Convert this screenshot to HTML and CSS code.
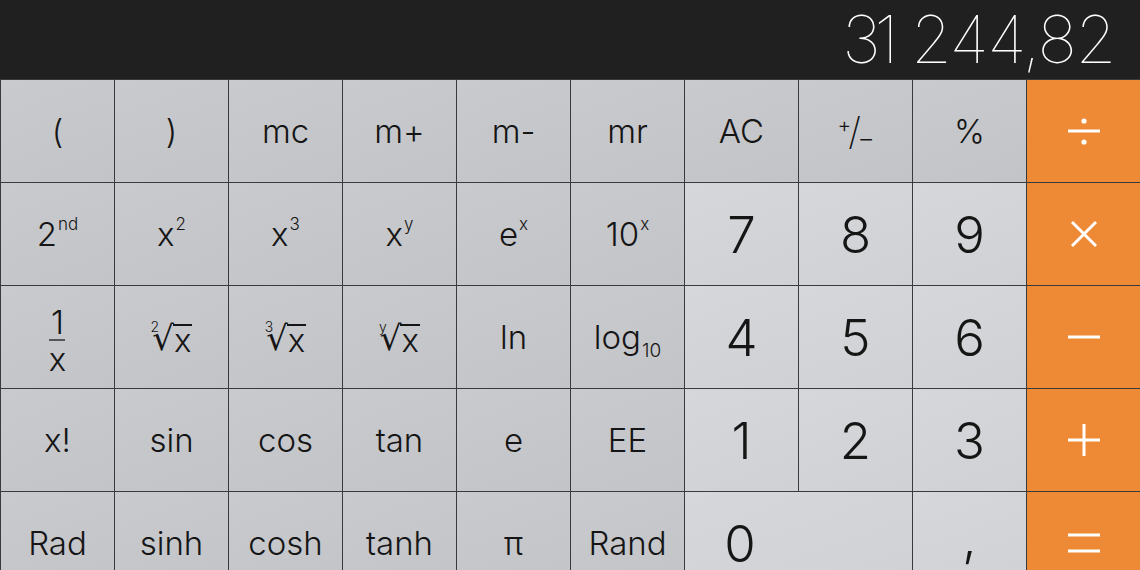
FILE: index.html
```html
<!DOCTYPE html>
<html lang="de">
<head>
<meta charset="utf-8">
<title>Rechner</title>
<link rel="stylesheet" href="styles.css">
</head>
<body>
<div class="calc">
  <div class="display"><span class="value"><span class="grp"><span class="d3">3</span>1</span><span class="rest">244,82</span></span></div>
  <div class="pad">
    <div class="key fn"><span class="lbl">(</span></div>
    <div class="key fn"><span class="lbl">)</span></div>
    <div class="key fn"><span class="lbl">mc</span></div>
    <div class="key fn"><span class="lbl">m+</span></div>
    <div class="key fn"><span class="lbl">m-</span></div>
    <div class="key fn"><span class="lbl">mr</span></div>
    <div class="key fn"><span class="lbl">AC</span></div>
    <div class="key fn"><span class="lbl pm"><span class="pm-p">+</span><span class="pm-s">/</span><span class="pm-m">−</span></span></div>
    <div class="key fn"><span class="lbl">%</span></div>
    <div class="key op">
      <svg width="34" height="34" viewBox="0 0 34 34"><path d="M1 17H33" stroke="#fff" stroke-width="3"/><circle cx="17" cy="7" r="2.6" fill="#fff"/><circle cx="17" cy="28" r="2.6" fill="#fff"/></svg>
    </div>

    <div class="key fn"><span class="lbl">2<sup class="sp">nd</sup></span></div>
    <div class="key fn"><span class="lbl">x<sup class="sp">2</sup></span></div>
    <div class="key fn"><span class="lbl">x<sup class="sp">3</sup></span></div>
    <div class="key fn"><span class="lbl">x<sup class="sp">y</sup></span></div>
    <div class="key fn"><span class="lbl">e<sup class="sp">x</sup></span></div>
    <div class="key fn"><span class="lbl">10<sup class="sp">x</sup></span></div>
    <div class="key num"><span class="dig">7</span></div>
    <div class="key num"><span class="dig">8</span></div>
    <div class="key num"><span class="dig">9</span></div>
    <div class="key op">
      <svg width="28" height="28" viewBox="0 0 28 28"><path d="M2 2L26 26M26 2L2 26" stroke="#fff" stroke-width="3"/></svg>
    </div>

    <div class="key fn"><span class="frac"><span class="fr-n">1</span><span class="fr-bar"></span><span class="fr-d">x</span></span></div>
    <div class="key fn"><span class="root"><span class="idx">2</span><span class="rad">√</span><span class="rx">x</span></span></div>
    <div class="key fn"><span class="root"><span class="idx">3</span><span class="rad">√</span><span class="rx">x</span></span></div>
    <div class="key fn"><span class="root"><span class="idx">y</span><span class="rad">√</span><span class="rx">x</span></span></div>
    <div class="key fn"><span class="lbl">ln</span></div>
    <div class="key fn"><span class="lbl">log<sub class="sb">10</sub></span></div>
    <div class="key num"><span class="dig">4</span></div>
    <div class="key num"><span class="dig">5</span></div>
    <div class="key num"><span class="dig">6</span></div>
    <div class="key op">
      <svg width="34" height="6" viewBox="0 0 34 6"><path d="M1 3H33" stroke="#fff" stroke-width="3"/></svg>
    </div>

    <div class="key fn"><span class="lbl">x!</span></div>
    <div class="key fn"><span class="lbl">sin</span></div>
    <div class="key fn"><span class="lbl">cos</span></div>
    <div class="key fn"><span class="lbl">tan</span></div>
    <div class="key fn"><span class="lbl">e</span></div>
    <div class="key fn"><span class="lbl">EE</span></div>
    <div class="key num"><span class="dig">1</span></div>
    <div class="key num"><span class="dig">2</span></div>
    <div class="key num"><span class="dig">3</span></div>
    <div class="key op">
      <svg width="34" height="34" viewBox="0 0 34 34"><path d="M1 17H33M17 1V33" stroke="#fff" stroke-width="3"/></svg>
    </div>

    <div class="key fn"><span class="lbl">Rad</span></div>
    <div class="key fn"><span class="lbl">sinh</span></div>
    <div class="key fn"><span class="lbl">cosh</span></div>
    <div class="key fn"><span class="lbl">tanh</span></div>
    <div class="key fn"><span class="lbl">π</span></div>
    <div class="key fn"><span class="lbl">Rand</span></div>
    <div class="key num zero"><span class="dig zero-dig">0</span></div>
    <div class="key num"><span class="dig comma">,</span></div>
    <div class="key op">
      <svg width="34" height="20" viewBox="0 0 34 20"><path d="M1 2H33M1 18H33" stroke="#fff" stroke-width="3"/></svg>
    </div>
  </div>
</div>
</body>
</html>
```

FILE: styles.css
```css
html, body {
  margin: 0;
  padding: 0;
  width: 1140px;
  height: 570px;
  overflow: hidden;
  background: #202020;
}

.calc {
  width: 1140px;
  font-family: "Inter", "Liberation Sans", sans-serif;
  color: #151515;
}

.display {
  height: 79px;
  box-sizing: border-box;
  padding: 6px 25px 0 0;
  background: #202020;
  display: flex;
  justify-content: flex-end;
}

.value {
  display: flex;
  gap: 14px;
  color: #fff;
  font-size: 66px;
  line-height: 66px;
  font-weight: 100;
  letter-spacing: -1.5px;
}

.d3 {
  margin-right: -5px;
}

.pad {
  display: grid;
  grid-template-columns: repeat(10, 1fr);
  grid-auto-rows: 102px;
  gap: 1px;
  padding: 1px 0 0 1px;
  background: #3a3a3a;
}

.key {
  display: flex;
  align-items: center;
  justify-content: center;
}

.fn {
  background: linear-gradient(160deg, #c9cacd 0%, #c3c4c8 100%);
}

.num {
  background: linear-gradient(160deg, #d6d7da 0%, #d0d1d5 100%);
}

.op {
  background: #ee8a35;
}

.lbl {
  font-size: 33px;
  line-height: 1;
  font-weight: 300;
  white-space: nowrap;
}

.dig {
  font-size: 51px;
  line-height: 1;
  font-weight: 300;
}

.comma {
  position: relative;
  top: -6px;
}

.zero {
  grid-column: span 2;
  justify-content: flex-start;
}

.zero-dig {
  width: 110px;
  text-align: center;
}

.sp {
  font-size: 17px;
  line-height: 0;
  vertical-align: 16px;
  margin-left: 1px;
}

.sb {
  font-size: 19px;
  line-height: 0;
  vertical-align: -8px;
  margin-left: 1px;
}

.pm {
  display: inline-flex;
  align-items: center;
}

.pm-p {
  font-size: 21px;
  position: relative;
  top: -7px;
  margin-right: -3px;
}

.pm-s {
  font-size: 38px;
  font-weight: 200;
}

.pm-m {
  font-size: 22px;
  position: relative;
  top: 7px;
  margin-left: -2px;
  transform: scaleX(1.2);
}

.frac {
  display: inline-flex;
  flex-direction: column;
  align-items: center;
  font-size: 33px;
  font-weight: 300;
  line-height: 1;
  margin-top: 6px;
}

.fr-n {
  line-height: 26px;
}

.fr-bar {
  width: 16px;
  height: 2px;
  background: #555;
  margin: 4px 0 6px;
}

.fr-d {
  line-height: 24px;
}

.root {
  display: inline-flex;
  align-items: flex-start;
  font-size: 33px;
  font-weight: 300;
  line-height: 1;
  margin-top: 4px;
}

.idx {
  font-size: 14px;
  line-height: 14px;
  margin-right: -7px;
  margin-top: -3px;
}

.rad {
  font-size: 34px;
  line-height: 34px;
  font-family: "DejaVu Sans", sans-serif;
  font-weight: 400;
  margin-top: -2px;
}

.rx {
  border-top: 2px solid #151515;
  line-height: 28px;
  margin-top: 1px;
  padding: 0 1px;
  margin-left: -1px;
}
```
